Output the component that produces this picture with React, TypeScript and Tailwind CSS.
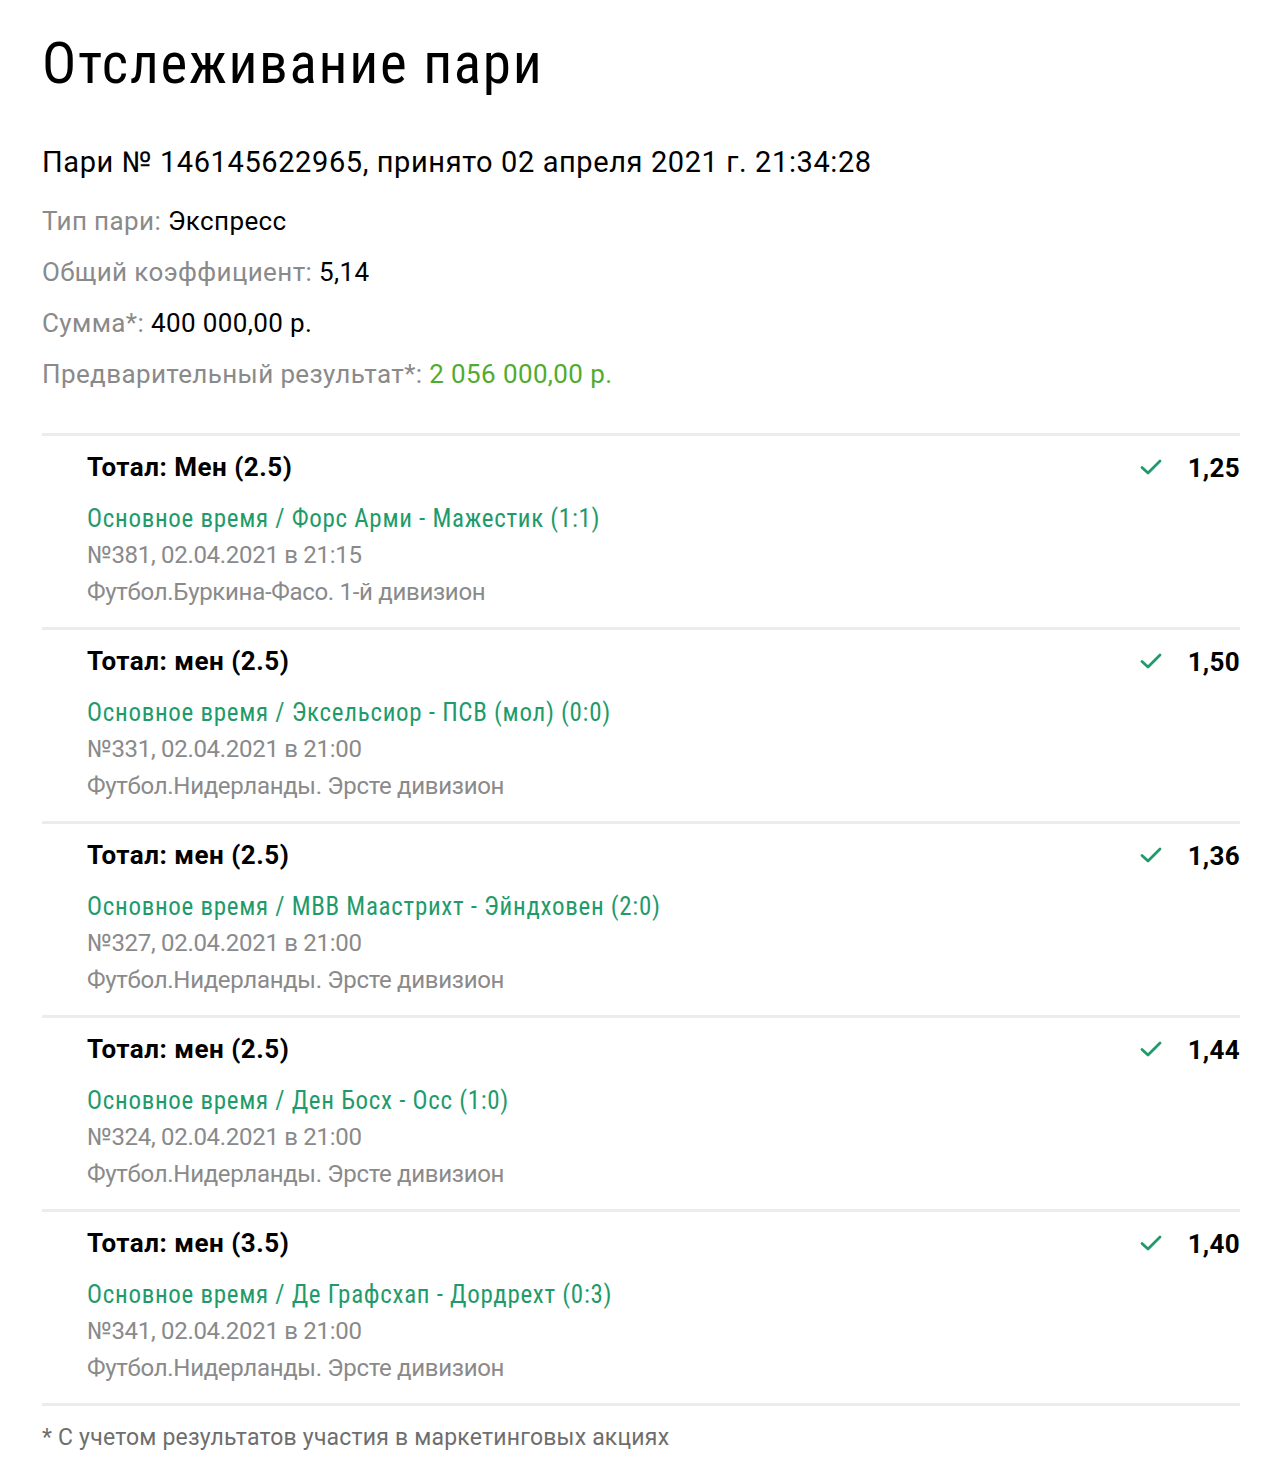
import React from "react";

const items = [
  { title: "Тотал: Мен (2.5)", event: "Основное время / Форс Арми - Мажестик (1:1)", num: "№381, 02.04.2021 в 21:15", league: "Футбол.Буркина-Фасо. 1-й дивизион", odd: "1,25" },
  { title: "Тотал: мен (2.5)", event: "Основное время / Эксельсиор - ПСВ (мол) (0:0)", num: "№331, 02.04.2021 в 21:00", league: "Футбол.Нидерланды. Эрсте дивизион", odd: "1,50" },
  { title: "Тотал: мен (2.5)", event: "Основное время / МВВ Маастрихт - Эйндховен (2:0)", num: "№327, 02.04.2021 в 21:00", league: "Футбол.Нидерланды. Эрсте дивизион", odd: "1,36" },
  { title: "Тотал: мен (2.5)", event: "Основное время / Ден Босх - Осс (1:0)", num: "№324, 02.04.2021 в 21:00", league: "Футбол.Нидерланды. Эрсте дивизион", odd: "1,44" },
  { title: "Тотал: мен (3.5)", event: "Основное время / Де Графсхап - Дордрехт (0:3)", num: "№341, 02.04.2021 в 21:00", league: "Футбол.Нидерланды. Эрсте дивизион", odd: "1,40" },
];

function Check() {
  return (
    <svg width="22" height="18" viewBox="0 0 22 18" fill="none">
      <path d="M2 9.5 L8 15 L20 3" stroke="#1f9b6b" strokeWidth="2.8" strokeLinecap="round" strokeLinejoin="round" />
    </svg>
  );
}

export default function App() {
  return (
    <div className="bg-white w-[1280px] min-h-[1482px] pl-[42px] pr-[40px] pt-[28px] text-black font-[family-name:Roboto,sans-serif]">
      <h1 className="text-[57px] leading-[72px] font-normal font-stretch-condensed tracking-[1.7px]">Отслеживание пари</h1>
      <div className="mt-[42px] text-[29px] leading-[40px] tracking-[0.6px]">Пари № 146145622965, принято 02 апреля 2021 г. 21:34:28</div>
      <div className="mt-[14px] flex flex-col text-[26px] leading-[51px] tracking-[0.38px]">
        <div><span className="text-[#8a8a8a]">Тип пари: </span>Экспресс</div>
        <div><span className="text-[#8a8a8a]">Общий коэффициент: </span>5,14</div>
        <div><span className="text-[#8a8a8a]">Сумма*: </span>400 000,00 р.</div>
        <div><span className="text-[#8a8a8a]">Предварительный результат*: </span><span className="text-[#52ab2e]">2 056 000,00 р.</span></div>
      </div>
      <div className="mt-[33px] border-t-[3px] border-[#ececec]">
        {items.map((it, i) => (
          <div key={i} className="flex border-b-[3px] border-[#ececec] pl-[45px] pt-[14px] pb-[16px]">
            <div className="flex-1">
              <div className="text-[26px] leading-[34px] font-bold tracking-[0.5px]">{it.title}</div>
              <div className="mt-[17px] text-[25px] leading-[36px] text-[#1f9b6b] font-stretch-condensed tracking-[0.7px]">{it.event}</div>
              <div className="text-[24px] leading-[37px] text-[#8a8a8a] tracking-[-0.3px]">{it.num}</div>
              <div className="text-[24px] leading-[37px] text-[#8a8a8a] tracking-[-0.3px]">{it.league}</div>
            </div>
            <div className="flex items-start gap-[26px] pt-[8px]">
              <Check />
              <span className="text-[26px] leading-[20px] font-bold tracking-[0.3px]">{it.odd}</span>
            </div>
          </div>
        ))}
      </div>
      <div className="mt-[16px] text-[23px] leading-[32px] text-[#6e6e6e] tracking-[0.2px]">* С учетом результатов участия в маркетинговых акциях</div>
    </div>
  );
}
